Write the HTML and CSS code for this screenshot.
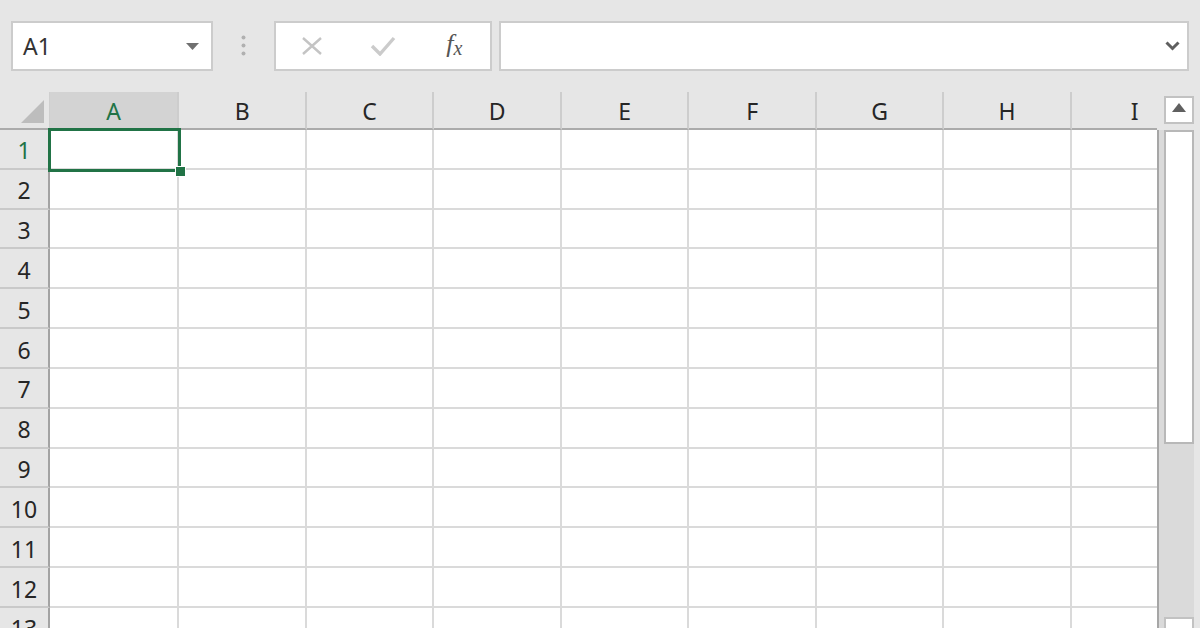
FILE: index.html
```html
<!DOCTYPE html>
<html lang="en">
<head>
    <meta charset="UTF-8">
    <title>Sheet1</title>
    <link rel="stylesheet" href="styles.css">
</head>
<body>
    <div class="toolbar">
        <div class="name-box">
            <span>A1</span>
            <svg width="13" height="7" viewBox="0 0 13 7"><polygon points="0,0 13,0 6.5,7" fill="#707070"/></svg>
        </div>
        <div class="grip">
            <svg width="5" height="21" viewBox="0 0 5 21">
                <circle cx="2.5" cy="2.5" r="2" fill="#b0b0b0"/>
                <circle cx="2.5" cy="10.5" r="2" fill="#b0b0b0"/>
                <circle cx="2.5" cy="18.5" r="2" fill="#b0b0b0"/>
            </svg>
        </div>
        <div class="formula-buttons">
            <span class="fbtn">
                <svg width="22" height="18" viewBox="0 0 22 18"><path d="M2 1 L20 17 M20 1 L2 17" stroke="#c4c4c4" stroke-width="2.4" fill="none"/></svg>
            </span>
            <span class="fbtn">
                <svg width="26" height="20" viewBox="0 0 26 20"><path d="M2 10 L10 18 L24 2" stroke="#cbcbcb" stroke-width="3.4" fill="none"/></svg>
            </span>
            <span class="fbtn fx">f<span class="fx-x">x</span></span>
        </div>
        <div class="formula-bar">
            <svg width="15" height="10" viewBox="0 0 15 10"><path d="M1.5 1.5 L7.5 7.5 L13.5 1.5" stroke="#5f5f5f" stroke-width="3" fill="none"/></svg>
        </div>
    </div>

    <div class="workspace">
        <div class="sheet">
            <div class="grid">
                <div class="corner"><svg width="23" height="23" viewBox="0 0 23 23"><polygon points="23,0 23,23 0,23" fill="#bdbdbd"/></svg></div>
                <div class="col-head active">A</div>
                <div class="col-head">B</div>
                <div class="col-head">C</div>
                <div class="col-head">D</div>
                <div class="col-head">E</div>
                <div class="col-head">F</div>
                <div class="col-head">G</div>
                <div class="col-head">H</div>
                <div class="col-head">I</div>

                <div class="row-head active">1</div><div class="cell selected"><span class="selection"><span class="handle"></span></span></div><div class="cell"></div><div class="cell"></div><div class="cell"></div><div class="cell"></div><div class="cell"></div><div class="cell"></div><div class="cell"></div><div class="cell"></div>
                <div class="row-head">2</div><div class="cell"></div><div class="cell"></div><div class="cell"></div><div class="cell"></div><div class="cell"></div><div class="cell"></div><div class="cell"></div><div class="cell"></div><div class="cell"></div>
                <div class="row-head">3</div><div class="cell"></div><div class="cell"></div><div class="cell"></div><div class="cell"></div><div class="cell"></div><div class="cell"></div><div class="cell"></div><div class="cell"></div><div class="cell"></div>
                <div class="row-head">4</div><div class="cell"></div><div class="cell"></div><div class="cell"></div><div class="cell"></div><div class="cell"></div><div class="cell"></div><div class="cell"></div><div class="cell"></div><div class="cell"></div>
                <div class="row-head">5</div><div class="cell"></div><div class="cell"></div><div class="cell"></div><div class="cell"></div><div class="cell"></div><div class="cell"></div><div class="cell"></div><div class="cell"></div><div class="cell"></div>
                <div class="row-head">6</div><div class="cell"></div><div class="cell"></div><div class="cell"></div><div class="cell"></div><div class="cell"></div><div class="cell"></div><div class="cell"></div><div class="cell"></div><div class="cell"></div>
                <div class="row-head">7</div><div class="cell"></div><div class="cell"></div><div class="cell"></div><div class="cell"></div><div class="cell"></div><div class="cell"></div><div class="cell"></div><div class="cell"></div><div class="cell"></div>
                <div class="row-head">8</div><div class="cell"></div><div class="cell"></div><div class="cell"></div><div class="cell"></div><div class="cell"></div><div class="cell"></div><div class="cell"></div><div class="cell"></div><div class="cell"></div>
                <div class="row-head">9</div><div class="cell"></div><div class="cell"></div><div class="cell"></div><div class="cell"></div><div class="cell"></div><div class="cell"></div><div class="cell"></div><div class="cell"></div><div class="cell"></div>
                <div class="row-head">10</div><div class="cell"></div><div class="cell"></div><div class="cell"></div><div class="cell"></div><div class="cell"></div><div class="cell"></div><div class="cell"></div><div class="cell"></div><div class="cell"></div>
                <div class="row-head">11</div><div class="cell"></div><div class="cell"></div><div class="cell"></div><div class="cell"></div><div class="cell"></div><div class="cell"></div><div class="cell"></div><div class="cell"></div><div class="cell"></div>
                <div class="row-head">12</div><div class="cell"></div><div class="cell"></div><div class="cell"></div><div class="cell"></div><div class="cell"></div><div class="cell"></div><div class="cell"></div><div class="cell"></div><div class="cell"></div>
                <div class="row-head">13</div><div class="cell"></div><div class="cell"></div><div class="cell"></div><div class="cell"></div><div class="cell"></div><div class="cell"></div><div class="cell"></div><div class="cell"></div><div class="cell"></div>
            </div>
        </div>

        <div class="scrollbar">
            <div class="scroll-head">
                <div class="scroll-btn">
                    <svg width="14" height="9" viewBox="0 0 14 9"><polygon points="0,9 14,9 7,0" fill="#606060"/></svg>
                </div>
            </div>
            <div class="scroll-body">
                <div class="thumb"></div>
                <div class="scroll-btn down"></div>
            </div>
        </div>
    </div>
</body>
</html>
```

FILE: styles.css
```css
* {
    margin: 0;
    padding: 0;
    box-sizing: border-box;
}

body {
    width: 1200px;
    height: 628px;
    overflow: hidden;
    background: #e6e6e6;
    font-family: "Noto Sans", "Open Sans", sans-serif;
    color: #262626;
}

/* formula toolbar */

.toolbar {
    display: flex;
    height: 71px;
    padding: 21px 11px 0 11px;
}

.name-box {
    width: 202px;
    height: 50px;
    display: flex;
    align-items: center;
    justify-content: space-between;
    padding: 0 12px 0 10px;
    background: white;
    border: 2px solid #cccccc;
    font-size: 23px;
    color: #333;
}

.grip {
    width: 61px;
    display: flex;
    align-items: center;
    justify-content: center;
    padding-bottom: 2px;
}

.formula-buttons {
    width: 218px;
    height: 50px;
    display: flex;
    background: white;
    border: 2px solid #cccccc;
}

.fbtn {
    flex: 1;
    display: flex;
    align-items: center;
    justify-content: center;
}

.fx {
    font-family: "Liberation Serif", serif;
    font-style: italic;
    font-size: 26px;
    color: #555;
    padding-bottom: 4px;
}

.fx-x {
    font-size: 20px;
    margin-top: 8px;
}

.formula-bar {
    flex: 1;
    height: 50px;
    margin-left: 7px;
    display: flex;
    align-items: center;
    justify-content: flex-end;
    padding-right: 7px;
    background: white;
    border: 2px solid #cccccc;
}

/* sheet */

.workspace {
    display: flex;
    margin-top: 21px;
    height: 536px;
}

.sheet {
    width: 1157px;
    overflow: hidden;
}

.grid {
    display: grid;
    width: 1199.4px;
    grid-template-columns: 50px 129.4px repeat(8, 127.5px);
    grid-template-rows: 38px repeat(13, 39.83px);
}

.corner {
    display: flex;
    align-items: flex-end;
    justify-content: flex-end;
    padding: 0 5px 5px 0;
    border-right: 1px solid #cfcfcf;
    border-bottom: 2px solid #ababab;
}

.col-head {
    display: flex;
    align-items: center;
    justify-content: center;
    padding-top: 2px;
    font-size: 23px;
    border-right: 2px solid #cdcdcd;
    border-bottom: 2px solid #ababab;
}

.col-head.active {
    background: #d3d3d3;
    color: #217346;
}

.row-head {
    display: flex;
    align-items: center;
    justify-content: center;
    padding-top: 3px;
    font-size: 23px;
    border-right: 2px solid #a3a3a3;
    border-bottom: 2px solid #c9c9c9;
}

.row-head.active {
    color: #217346;
}

.cell {
    background: white;
    border-right: 2px solid #dadada;
    border-bottom: 2px solid #dadada;
}

.cell.selected {
    position: relative;
}

.selection {
    position: absolute;
    top: -2px;
    left: -2px;
    right: -4px;
    bottom: -4px;
    border: 3px solid #217346;
}

.handle {
    position: absolute;
    right: -8px;
    bottom: -8px;
    width: 11px;
    height: 11px;
    background: #217346;
    border: 1px solid white;
}

/* vertical scrollbar */

.scrollbar {
    width: 43px;
    display: flex;
    flex-direction: column;
}

.scroll-head {
    height: 38px;
    padding: 4px 6px 0 7px;
}

.scroll-btn {
    width: 30px;
    height: 28px;
    display: flex;
    align-items: center;
    justify-content: center;
    padding-bottom: 5px;
    background: white;
    border: 2px solid #c2c2c2;
}

.scroll-body {
    flex: 1;
    margin-right: 6px;
    padding-left: 5px;
    overflow: hidden;
    background: #dadada;
    border-left: 2px solid #a6a6a6;
}

.thumb {
    width: 30px;
    height: 314px;
    background: white;
    border: 2px solid #b8b8b8;
}

.scroll-btn.down {
    margin-top: 173px;
}
```
